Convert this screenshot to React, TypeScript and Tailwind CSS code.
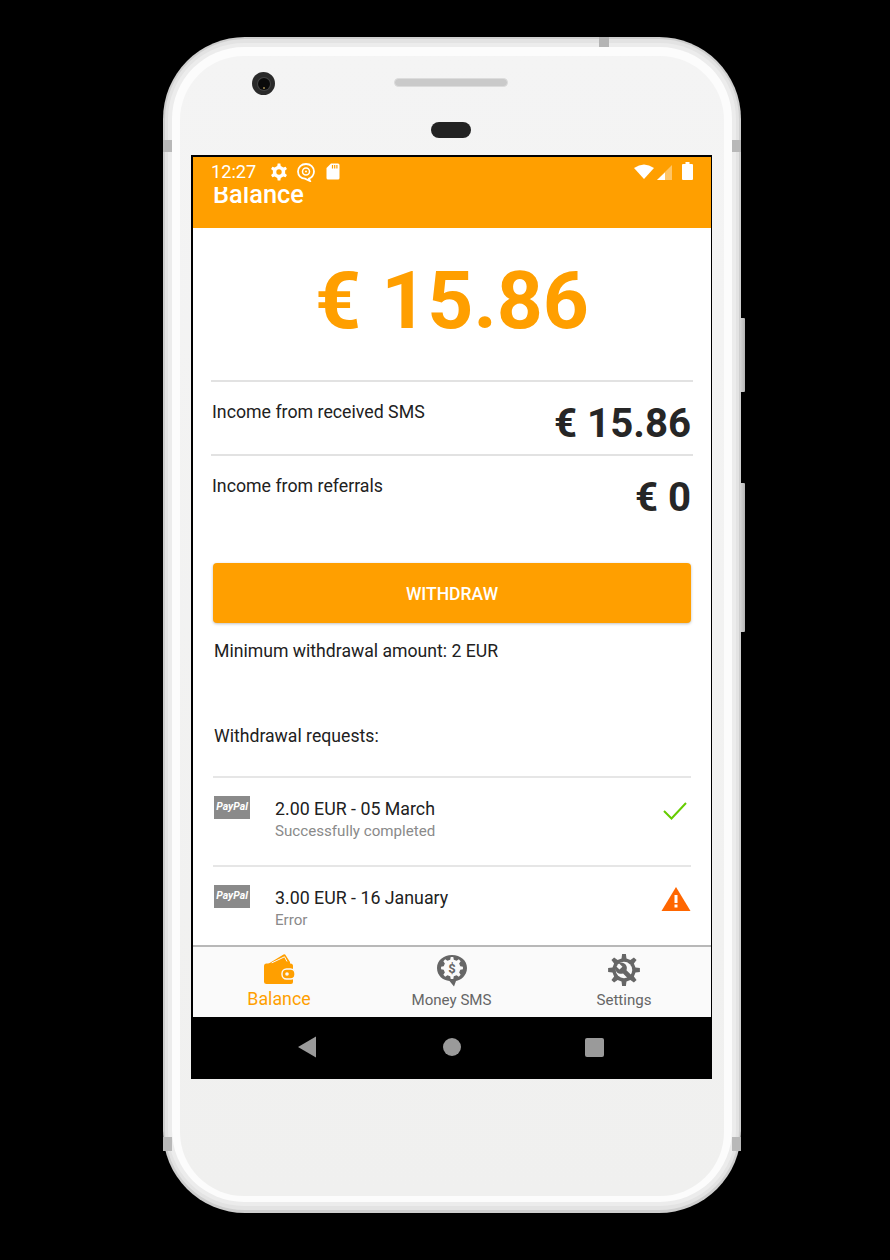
const gear = (cx: number, cy: number, ro: number, ri: number, n: number) => {
  const pts: string[] = [];
  const step = (Math.PI * 2) / n;
  for (let i = 0; i < n; i++) {
    const a = i * step - Math.PI / 2;
    const w = step * 0.2;
    [[a - w * 1.35, ri], [a - w * 0.75, ro], [a + w * 0.75, ro], [a + w * 1.35, ri]].forEach(([t, r]) => {
      pts.push(`${(cx + r * Math.cos(t)).toFixed(2)},${(cy + r * Math.sin(t)).toFixed(2)}`);
    });
  }
  return pts.join(" ");
};

function Wallet() {
  return (
    <svg width="34" height="33" viewBox="0 0 34 33" className="mt-[-4px] block">
      <path d="M6 12 L21.500 2.500 Q23 1.800 23.500 3 L28 10 L28 13 L6 13 Z" fill="#ff9f00" />
      <path d="M9.500 11 L22.500 4.800 L25 9.500" fill="none" stroke="#fafafa" strokeWidth="1" />
      <path d="M2 14 Q2 11.500 4.500 11.500 H28.500 Q31 11.500 31 14 V30 Q31 32 29 32 H4.500 Q2 32 2 30 Z" fill="#ff9f00" />
      <rect x="20" y="17" width="13" height="10" rx="4.500" fill="#ff9f00" stroke="#fafafa" strokeWidth="1.400" />
      <circle cx="25" cy="22" r="1.800" fill="#fafafa" />
    </svg>
  );
}

function MoneyBubble() {
  return (
    <svg width="32" height="33" viewBox="0 0 32 33" className="block">
      <path d="M16 1 C24.500 1 31 6.500 31 14 C31 21.500 24.500 26.500 20 27 L18 32.500 L13.500 27 C7 26.500 1 21.500 1 14 C1 6.500 7.500 1 16 1 Z" fill="#666666" />
      <polygon points={gear(16, 14, 11, 8.500, 8)} fill="#fafafa" />
      <text x="16" y="18.500" textAnchor="middle" fontSize="13" fontWeight="700" fontFamily="Roboto, sans-serif" fill="#666666">$</text>
    </svg>
  );
}

function GearWrench() {
  return (
    <svg width="32" height="32" viewBox="0 0 34 34" className="block">
      <polygon points={gear(17, 17, 17, 12.500, 8)} fill="#666666" />
      <circle cx="17" cy="17" r="8.800" fill="#fafafa" />
      <path d="M8 12.500 L12.200 16.600 L15.400 13.500 L11.300 9.500 C14.500 8.300 18.500 9.700 19.700 13 C20.200 14.500 20.100 15.900 19.600 17.200 L26.400 24 L22.800 27.500 L16 20.700 C14.500 21.200 13 21.300 11.500 20.700 C8.200 19.400 6.800 15.700 8 12.500 Z" fill="#666666" />
    </svg>
  );
}

function PayPal() {
  return (
    <div className="flex h-[23px] w-[36px] shrink-0 items-center justify-center bg-[#8a8a8a] text-[10.500px] font-bold italic leading-none text-white">
      PayPal
    </div>
  );
}

function Request({ title, sub, icon }: { title: string; sub: string; icon: React.ReactNode }) {
  return (
    <div className="flex h-[89px] border-t-2 border-[#e6e6e6] pl-px">
      <div className="mt-[18px]"><PayPal /></div>
      <div className="ml-[25px] mt-[19px] flex-1">
        <div className="text-[17.800px] leading-[24px] text-[#212121]">{title}</div>
        <div className="mt-[-1px] text-[15.150px] leading-[22px] text-[#8a8a8a]">{sub}</div>
      </div>
      {icon}
    </div>
  );
}

function Tab({ icon, label, active }: { icon: React.ReactNode; label: string; active?: boolean }) {
  return (
    <div className="flex w-[172px] flex-col items-center pt-[5px]">
      <div className="flex h-[36px] items-center">{icon}</div>
      <div className={active ? "mt-[-1px] text-[17.800px] leading-[24px] text-[#ff9f00]" : "mt-0 text-[15.100px] leading-[24px] text-[#666666]"}>{label}</div>
    </div>
  );
}

export default function App() {
  return (
    <div className="h-[1260px] w-[890px] overflow-hidden bg-black pl-[163px] pt-[37px] font-['Roboto',sans-serif]">
      <div className="relative h-[1176px] w-[578px]">
        {/* side buttons */}
        <div className="absolute left-[577px] top-[281px] h-[74px] w-[5px] rounded-r-[1px] bg-gradient-to-r from-[#d8d8d8] to-[#b5b5b5]" />
        <div className="absolute left-[577px] top-[446px] h-[149px] w-[5px] rounded-r-[1px] bg-gradient-to-r from-[#d8d8d8] to-[#b5b5b5]" />

        <div className="h-full rounded-[82px] bg-[#cfcfcf] px-[2px] pb-[3px] pt-[2px]">
          <div className="h-full rounded-[80px] bg-[#e3e3e3] px-[3px] pb-[4px] pt-[4px]">
            <div className="h-full rounded-[76px] bg-[#ececec] px-[4px] pb-[4px] pt-[4px]">
              <div className="h-full rounded-[72px] bg-[#fcfcfc] px-[8px] pb-[6px] pt-[9px]">
                <div className="flex h-full flex-col rounded-[64px] bg-gradient-to-b from-[#f4f4f4] to-[#f0f0ef] pl-[11px] pr-[12px]">
                  <div className="relative flex h-[99px] shrink-0 flex-col items-center">
                    <div className="absolute left-[61px] top-[16px] flex h-[23px] w-[23px] items-center justify-center rounded-full bg-[#2a2a2a]">
                      <div className="flex h-[12px] w-[12px] items-end justify-center rounded-full bg-[#0a0a0a] ring-1 ring-[#444444]">
                        <div className="mb-[1px] h-[2px] w-[2px] rounded-full bg-[#a08a50]" />
                      </div>
                    </div>
                    <div className="ml-[-1px] mt-[22px] h-[9px] w-[114px] rounded-full border border-[#dcdcdc] bg-[#cacaca]" />
                    <div className="ml-[-1px] mt-[35px] h-[16px] w-[40px] rounded-full bg-[#222222]" />
                  </div>

                  <div className="flex h-[924px] flex-col border-l-2 border-r border-t-2 border-black bg-white">
                    {/* App bar */}
                    <div className="h-[71px] shrink-0 overflow-hidden bg-[#ff9f00] text-white">
                      <div className="relative z-10 flex h-[30px] items-center bg-[#ff9f00] pb-[5px] pl-[18px] pr-[18px]">
                        <span className="mt-[5px] text-[18.200px] leading-none">12:27</span>
                        <svg width="18" height="18" viewBox="0 0 18 18" className="ml-[14px] mt-[5px]">
                          <polygon points={gear(9, 9, 8.500, 6.300, 6)} fill="#fff" />
                          <circle cx="9" cy="9" r="2.700" fill="#ff9f00" />
                        </svg>
                        <svg width="18" height="19" viewBox="0 0 18 19" className="ml-[9px] mt-[5px]">
                          <path d="M9 1 C13.500 1 17 4 17 8.500 C17 12.500 14 15 12 15.500 L13 18 L8 15.700 C4 15.500 1 12.500 1 8.500 C1 4 4.500 1 9 1 Z" fill="none" stroke="#fff" strokeWidth="1.800" />
                          <circle cx="9" cy="8.500" r="3.500" fill="none" stroke="#fff" strokeWidth="1.500" />
                          <circle cx="9" cy="8.500" r="1" fill="#fff" />
                        </svg>
                        <svg width="14" height="17" viewBox="0 0 14 17" className="ml-[11px] mt-[4px]">
                          <path d="M5 0.500 H12 Q13.500 0.500 13.500 2 V15 Q13.500 16.500 12 16.500 H2 Q0.500 16.500 0.500 15 V5 Z" fill="#fff" />
                          <path d="M6.500 2 V5.500 M8.700 2 V5.500 M10.900 2 V5.500" stroke="#ff9f00" strokeWidth="1.200" />
                        </svg>
                        <div className="flex-1" />
                        <svg width="20" height="15" viewBox="0 0 20 15" className="mt-[4px]">
                          <path d="M0 4 Q10 -3 20 4 L10 15 Z" fill="#fff" />
                        </svg>
                        <svg width="15" height="15" viewBox="0 0 15 15" className="ml-[3px] mt-[6px]">
                          <polygon points="15,0 15,15 0,15" fill="#ffffff" fillOpacity="0.4" />
                          <polygon points="8,7.500 8,15 0,15" fill="#fff" />
                        </svg>
                        <svg width="11" height="18" viewBox="0 0 11 18" className="ml-[10px] mt-[3px]">
                          <path d="M3.500 0 H7.500 V2 H10 Q11 2 11 3 V17 Q11 18 10 18 H1 Q0 18 0 17 V3 Q0 2 1 2 H3.500 Z" fill="#fff" />
                        </svg>
                      </div>
                      <div className="mt-[-7px] pl-[20px] text-[25.400px] font-medium leading-[28px]">Balance</div>
                    </div>

                    {/* Body */}
                    <div className="flex-1 overflow-hidden">
                      <div className="h-[152px] pt-[28px] text-center text-[80.400px] font-bold leading-[90px] text-[#ff9f00]">€ 15.86</div>
                      <div className="mx-[18px] flex h-[74px] justify-between border-t-2 border-[#e2e2e2] pl-px pr-[2px]">
                        <span className="mt-[18px] text-[17.750px] leading-[24px] text-[#212121]">Income from received SMS</span>
                        <span className="mt-[18px] text-[40.200px] font-bold leading-[48px] text-[#262626]">€ 15.86</span>
                      </div>
                      <div className="mx-[18px] flex h-[109px] justify-between border-t-2 border-[#e2e2e2] pl-px pr-[2px]">
                        <span className="mt-[18px] text-[17.750px] leading-[24px] text-[#212121]">Income from referrals</span>
                        <span className="mt-[18px] text-[40.200px] font-bold leading-[48px] text-[#262626]">€ 0</span>
                      </div>
                      <div className="mx-[20px] flex h-[60px] items-center justify-center rounded-[4px] bg-[#ff9f00] pt-[2px] text-[17.500px] font-medium text-white shadow-[0_1px_3px_rgba(0,0,0,0.25)]">WITHDRAW</div>
                      <div className="ml-[21px] mt-[16px] text-[17.650px] leading-[24px] text-[#212121]">Minimum withdrawal amount: 2 EUR</div>
                      <div className="ml-[21px] mt-[61px] text-[17.650px] leading-[24px] text-[#212121]">Withdrawal requests:</div>
                      <div className="mx-[20px] mt-[28px]">
                        <Request
                          title="2.00 EUR - 05 March"
                          sub="Successfully completed"
                          icon={
                            <svg width="26" height="20" viewBox="0 0 26 20" className="mr-[3px] mt-[23px]">
                              <path d="M2 10 L9.500 17.500 L24 2" fill="none" stroke="#66cc00" strokeWidth="2" />
                            </svg>
                          }
                        />
                        <Request
                          title="3.00 EUR - 16 January"
                          sub="Error"
                          icon={
                            <svg width="30" height="26" viewBox="0 0 30 26" className="mt-[19px]">
                              <polygon points="15,1 29.500,25 0.500,25" fill="#ff6600" />
                              <rect x="13.500" y="9" width="3" height="8" fill="#fff" />
                              <rect x="13.500" y="18.500" width="3" height="3" fill="#fff" />
                            </svg>
                          }
                        />
                      </div>
                    </div>

                    {/* Tabs */}
                    <div className="flex h-[72px] shrink-0 justify-between border-t-2 border-[#b8b8b8] bg-[#fafafa] pr-px">
                      <Tab active icon={<Wallet />} label="Balance" />
                      <Tab icon={<MoneyBubble />} label="Money SMS" />
                      <Tab icon={<GearWrench />} label="Settings" />
                    </div>

                    {/* Nav bar */}
                    <div className="flex h-[62px] shrink-0 items-center bg-black pb-[2px] pl-[104px]">
                      <svg width="20" height="22" viewBox="0 0 20 22"><polygon points="19,0.500 19,21.500 1,11" fill="#9a9a9a" /></svg>
                      <div className="ml-[126px] h-[18px] w-[18px] rounded-full bg-[#9a9a9a]" />
                      <div className="ml-[124px] h-[19px] w-[19px] rounded-[2px] bg-[#9a9a9a]" />
                    </div>
                  </div>
                </div>
              </div>
            </div>
          </div>
        </div>

        {/* antenna bands */}
        <div className="absolute left-[436px] top-0 h-[10px] w-[10px] bg-[#b4b4b4]" />
        <div className="absolute left-0 top-[103px] h-[12px] w-[9px] bg-[#b8b8b8]" />
        <div className="absolute right-0 top-[103px] h-[12px] w-[9px] bg-[#b8b8b8]" />
        <div className="absolute bottom-[62px] left-0 h-[14px] w-[9px] bg-[#b8b8b8]" />
        <div className="absolute bottom-[62px] right-0 h-[14px] w-[9px] bg-[#b8b8b8]" />
      </div>
    </div>
  );
}
